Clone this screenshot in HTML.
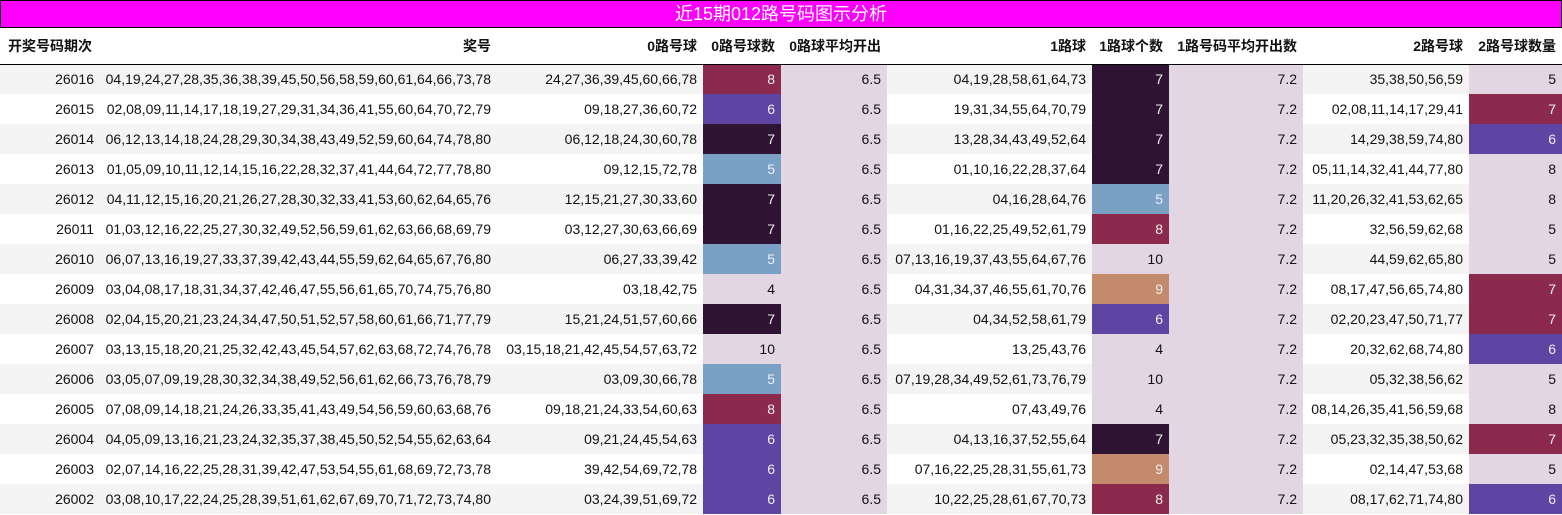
<!DOCTYPE html>
<html><head><meta charset="utf-8"><style>
*{margin:0;padding:0;box-sizing:border-box}
body{width:1562px;height:515px;background:#fff;font-family:"Liberation Sans","Noto Sans CJK SC",sans-serif;font-size:14px;color:#111;overflow:hidden}
.title{height:28px;background:#ff00ff;border:1px solid #000;color:#fff;text-align:center;font-size:18px;line-height:26px}
table{border-collapse:collapse;table-layout:fixed;width:1562px}
th{height:36px;font-weight:bold;text-align:right;padding:0 6px 0 0;border-bottom:1px solid #000;white-space:nowrap;vertical-align:middle}
th:first-child{text-align:left;padding-left:8px}
td{height:30px;text-align:right;padding:0 6px 0 0;white-space:nowrap}
tr.g td{background:#f4f4f4}
tr td.L{background:#e2d6e2;color:#111}
tr td.B{background:#7aa1c4;color:#eef}
tr td.P{background:#5e44a3;color:#eee}
tr td.D{background:#2e1432;color:#eee}
tr td.M{background:#8b2a4c;color:#eee}
tr td.S{background:#c48a6c;color:#eee}
</style></head><body>
<div class="title">近15期012路号码图示分析</div>
<table>
<colgroup><col style="width:100px"><col style="width:397px"><col style="width:206px"><col style="width:78px"><col style="width:106px"><col style="width:205px"><col style="width:77px"><col style="width:134px"><col style="width:166px"><col style="width:93px"></colgroup>
<tr><th>开奖号码期次</th><th>奖号</th><th>0路号球</th><th>0路号球数</th><th>0路球平均开出</th><th>1路球</th><th>1路球个数</th><th>1路号码平均开出数</th><th>2路号球</th><th>2路号球数量</th></tr>
<tr class="g"><td>26016</td><td>04,19,24,27,28,35,36,38,39,45,50,56,58,59,60,61,64,66,73,78</td><td>24,27,36,39,45,60,66,78</td><td class="M">8</td><td class="L">6.5</td><td>04,19,28,58,61,64,73</td><td class="D">7</td><td class="L">7.2</td><td>35,38,50,56,59</td><td class="L">5</td></tr>
<tr><td>26015</td><td>02,08,09,11,14,17,18,19,27,29,31,34,36,41,55,60,64,70,72,79</td><td>09,18,27,36,60,72</td><td class="P">6</td><td class="L">6.5</td><td>19,31,34,55,64,70,79</td><td class="D">7</td><td class="L">7.2</td><td>02,08,11,14,17,29,41</td><td class="M">7</td></tr>
<tr class="g"><td>26014</td><td>06,12,13,14,18,24,28,29,30,34,38,43,49,52,59,60,64,74,78,80</td><td>06,12,18,24,30,60,78</td><td class="D">7</td><td class="L">6.5</td><td>13,28,34,43,49,52,64</td><td class="D">7</td><td class="L">7.2</td><td>14,29,38,59,74,80</td><td class="P">6</td></tr>
<tr><td>26013</td><td>01,05,09,10,11,12,14,15,16,22,28,32,37,41,44,64,72,77,78,80</td><td>09,12,15,72,78</td><td class="B">5</td><td class="L">6.5</td><td>01,10,16,22,28,37,64</td><td class="D">7</td><td class="L">7.2</td><td>05,11,14,32,41,44,77,80</td><td class="L">8</td></tr>
<tr class="g"><td>26012</td><td>04,11,12,15,16,20,21,26,27,28,30,32,33,41,53,60,62,64,65,76</td><td>12,15,21,27,30,33,60</td><td class="D">7</td><td class="L">6.5</td><td>04,16,28,64,76</td><td class="B">5</td><td class="L">7.2</td><td>11,20,26,32,41,53,62,65</td><td class="L">8</td></tr>
<tr><td>26011</td><td>01,03,12,16,22,25,27,30,32,49,52,56,59,61,62,63,66,68,69,79</td><td>03,12,27,30,63,66,69</td><td class="D">7</td><td class="L">6.5</td><td>01,16,22,25,49,52,61,79</td><td class="M">8</td><td class="L">7.2</td><td>32,56,59,62,68</td><td class="L">5</td></tr>
<tr class="g"><td>26010</td><td>06,07,13,16,19,27,33,37,39,42,43,44,55,59,62,64,65,67,76,80</td><td>06,27,33,39,42</td><td class="B">5</td><td class="L">6.5</td><td>07,13,16,19,37,43,55,64,67,76</td><td class="L">10</td><td class="L">7.2</td><td>44,59,62,65,80</td><td class="L">5</td></tr>
<tr><td>26009</td><td>03,04,08,17,18,31,34,37,42,46,47,55,56,61,65,70,74,75,76,80</td><td>03,18,42,75</td><td class="L">4</td><td class="L">6.5</td><td>04,31,34,37,46,55,61,70,76</td><td class="S">9</td><td class="L">7.2</td><td>08,17,47,56,65,74,80</td><td class="M">7</td></tr>
<tr class="g"><td>26008</td><td>02,04,15,20,21,23,24,34,47,50,51,52,57,58,60,61,66,71,77,79</td><td>15,21,24,51,57,60,66</td><td class="D">7</td><td class="L">6.5</td><td>04,34,52,58,61,79</td><td class="P">6</td><td class="L">7.2</td><td>02,20,23,47,50,71,77</td><td class="M">7</td></tr>
<tr><td>26007</td><td>03,13,15,18,20,21,25,32,42,43,45,54,57,62,63,68,72,74,76,78</td><td>03,15,18,21,42,45,54,57,63,72</td><td class="L">10</td><td class="L">6.5</td><td>13,25,43,76</td><td class="L">4</td><td class="L">7.2</td><td>20,32,62,68,74,80</td><td class="P">6</td></tr>
<tr class="g"><td>26006</td><td>03,05,07,09,19,28,30,32,34,38,49,52,56,61,62,66,73,76,78,79</td><td>03,09,30,66,78</td><td class="B">5</td><td class="L">6.5</td><td>07,19,28,34,49,52,61,73,76,79</td><td class="L">10</td><td class="L">7.2</td><td>05,32,38,56,62</td><td class="L">5</td></tr>
<tr><td>26005</td><td>07,08,09,14,18,21,24,26,33,35,41,43,49,54,56,59,60,63,68,76</td><td>09,18,21,24,33,54,60,63</td><td class="M">8</td><td class="L">6.5</td><td>07,43,49,76</td><td class="L">4</td><td class="L">7.2</td><td>08,14,26,35,41,56,59,68</td><td class="L">8</td></tr>
<tr class="g"><td>26004</td><td>04,05,09,13,16,21,23,24,32,35,37,38,45,50,52,54,55,62,63,64</td><td>09,21,24,45,54,63</td><td class="P">6</td><td class="L">6.5</td><td>04,13,16,37,52,55,64</td><td class="D">7</td><td class="L">7.2</td><td>05,23,32,35,38,50,62</td><td class="M">7</td></tr>
<tr><td>26003</td><td>02,07,14,16,22,25,28,31,39,42,47,53,54,55,61,68,69,72,73,78</td><td>39,42,54,69,72,78</td><td class="P">6</td><td class="L">6.5</td><td>07,16,22,25,28,31,55,61,73</td><td class="S">9</td><td class="L">7.2</td><td>02,14,47,53,68</td><td class="L">5</td></tr>
<tr class="g"><td>26002</td><td>03,08,10,17,22,24,25,28,39,51,61,62,67,69,70,71,72,73,74,80</td><td>03,24,39,51,69,72</td><td class="P">6</td><td class="L">6.5</td><td>10,22,25,28,61,67,70,73</td><td class="M">8</td><td class="L">7.2</td><td>08,17,62,71,74,80</td><td class="P">6</td></tr>
</table>
</body></html>
